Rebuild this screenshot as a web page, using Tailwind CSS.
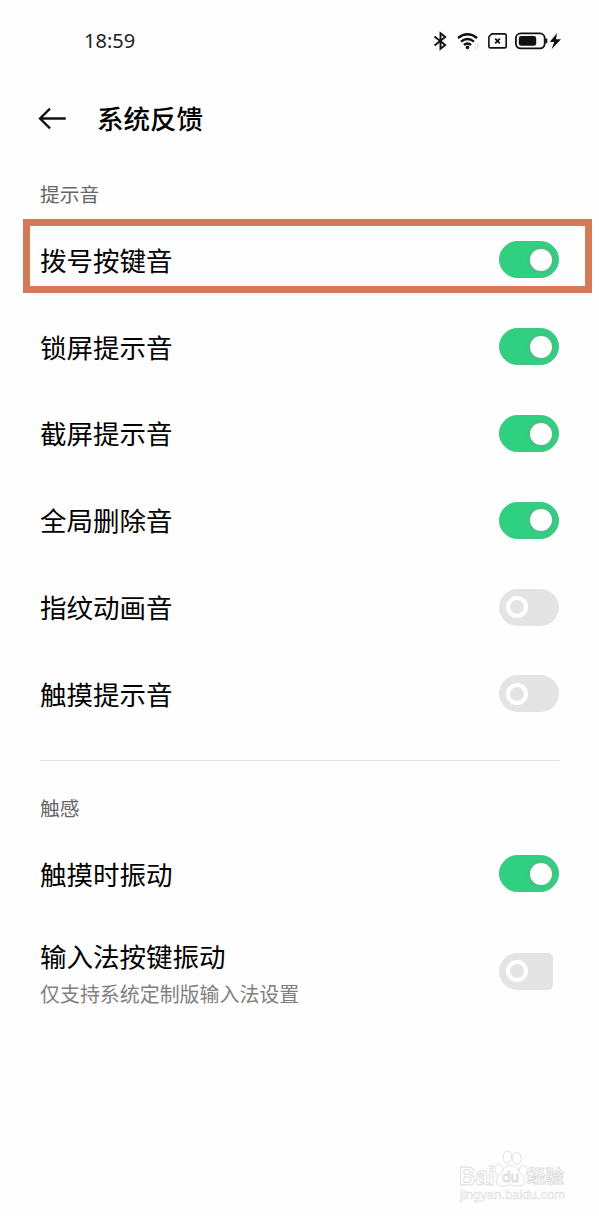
<!DOCTYPE html>
<html lang="zh-CN">
<head>
  <meta charset="UTF-8" />
  <meta name="viewport" content="width=device-width, initial-scale=1.0"/>
  <title>系统反馈</title>
  <script src="https://cdn.jsdelivr.net/npm/@tailwindcss/browser@4"></script>
</head>
<body class="relative h-[1216px] overflow-hidden bg-[#fefefe] text-black font-['Noto_Sans_CJK_SC',sans-serif]">
  <!-- Status bar -->
  <header class="flex h-20 items-center justify-between pl-[84px] pr-[37px] pt-px">
    <span class="font-['Noto_Sans',sans-serif] text-[20px] leading-none text-[#222]">18:59</span>
    <svg class="h-6 w-[130px]" viewBox="0 0 130 24" fill="none" stroke="#111">
      <path d="M2.5 7.5 L13.2 16 L8.5 19.8 V4.2 L13.2 8 L2.5 16.5" stroke-width="1.9"/>
      <path d="M26 9 Q35.5 1.5 45 9 M29 12.6 Q35.5 7.3 42 12.6 M32 16 Q35.5 13 39 16" stroke-width="2.4"/>
      <circle cx="35.5" cy="18.4" r="1.8" fill="#111" stroke="none"/>
      <path d="M43.5 13.5 v2 M46 15.5 v3 M43.5 17.5 v3" stroke="#ddd" stroke-width="1.5"/>
      <path d="M59.8 4.9 H72.5 Q74.2 4.9 74.2 6.6 V17.2 Q74.2 18.9 72.5 18.9 H58.6 Q56.9 18.9 56.9 17.2 V7.8 Z" stroke-width="1.6"/>
      <path d="M63.2 9.7 l4.6 4.6 m0 -4.6 l-4.6 4.6" stroke-width="1.8"/>
      <rect x="83.9" y="4.4" width="28.8" height="15" rx="4.8" stroke-width="1.8"/>
      <rect x="86.8" y="7" width="17.4" height="9.8" rx="2.4" fill="#111" stroke="none"/>
      <path d="M114.3 9.5 v4.8" stroke-width="2"/>
      <path d="M125 4 L117.8 13 h4.4 L119.6 20.3 L129 10.2 h-5 Z" fill="#111" stroke="none"/>
    </svg>
  </header>

  <!-- Title -->
  <div class="flex h-[77px] items-center gap-[30px] pl-[38px]">
    <svg class="h-6 w-[29px]" viewBox="0 0 29 24" fill="none" stroke="#111" stroke-width="2.3">
      <path d="M27.7 11.5 H2 M12 1.6 L2 11.5 L12 21.4"/>
    </svg>
    <h1 class="text-[26.5px] font-medium leading-none">系统反馈</h1>
  </div>

  <main class="pl-10 pr-10">
    <h2 class="flex h-[59.6px] items-center pt-[14px] text-[19.8px] leading-none text-[#666]">提示音</h2>
    <ul class="text-[26.5px] leading-none">
      <li class="relative flex h-[86.8px] items-center justify-between">
        <!-- highlight frame -->
        <div class="absolute -left-[17px] -right-[33px] top-[2.4px] h-[74px] border-[7px] border-[#d57a56]"></div>
        拨号按键音
        <span class="flex h-[37px] w-[60px] items-center justify-end rounded-full border-[1.5px] border-[#43c284] bg-[#2fd080] pr-[6px]">
          <i class="size-[22px] rounded-full bg-white ring-[3px] ring-[#43c284]"></i>
        </span>
      </li>
      <li class="flex h-[86.8px] items-center justify-between">
        锁屏提示音
        <span class="flex h-[37px] w-[60px] items-center justify-end rounded-full border-[1.5px] border-[#43c284] bg-[#2fd080] pr-[6px]">
          <i class="size-[22px] rounded-full bg-white ring-[3px] ring-[#43c284]"></i>
        </span>
      </li>
      <li class="flex h-[86.8px] items-center justify-between">
        截屏提示音
        <span class="flex h-[37px] w-[60px] items-center justify-end rounded-full border-[1.5px] border-[#43c284] bg-[#2fd080] pr-[6px]">
          <i class="size-[22px] rounded-full bg-white ring-[3px] ring-[#43c284]"></i>
        </span>
      </li>
      <li class="flex h-[86.8px] items-center justify-between">
        全局删除音
        <span class="flex h-[37px] w-[60px] items-center justify-end rounded-full border-[1.5px] border-[#43c284] bg-[#2fd080] pr-[6px]">
          <i class="size-[22px] rounded-full bg-white ring-[3px] ring-[#43c284]"></i>
        </span>
      </li>
      <li class="flex h-[86.8px] items-center justify-between">
        指纹动画音
        <span class="flex h-[37px] w-[60px] items-center rounded-full bg-[#e4e4e4] pl-[7px]">
          <i class="size-[22px] rounded-full border-[4.5px] border-white"></i>
        </span>
      </li>
      <li class="flex h-[86.8px] items-center justify-between">
        触摸提示音
        <span class="flex h-[37px] w-[60px] items-center rounded-full bg-[#e4e4e4] pl-[7px]">
          <i class="size-[22px] rounded-full border-[4.5px] border-white"></i>
        </span>
      </li>
    </ul>

    <hr class="mt-[22.6px] border-t border-[#e2e2e2]" />

    <h2 class="flex h-[69.6px] items-center pt-[24px] text-[19.8px] leading-none text-[#666]">触感</h2>
    <ul class="text-[26.5px] leading-none">
      <li class="flex h-[86.8px] items-center justify-between">
        触摸时振动
        <span class="flex h-[37px] w-[60px] items-center justify-end rounded-full border-[1.5px] border-[#43c284] bg-[#2fd080] pr-[6px]">
          <i class="size-[22px] rounded-full bg-white ring-[3px] ring-[#43c284]"></i>
        </span>
      </li>
      <li class="flex h-[108px] items-center justify-between">
        <div class="flex flex-col gap-[14.5px] pt-[3.5px]">
          <span>输入法按键振动</span>
          <span class="text-[19.95px] text-[#808080]">仅支持系统定制版输入法设置</span>
        </div>
        <span class="mr-[6px] flex h-[37px] w-[54px] items-center rounded-l-[18.5px] rounded-r-[5px] bg-[#e4e4e4] pl-[7px]">
          <i class="size-[22px] rounded-full border-[4.5px] border-white"></i>
        </span>
      </li>
    </ul>
  </main>

  <!-- Watermark -->
  <svg class="absolute left-[455px] top-[1145px] h-[62px] w-[120px]" viewBox="0 0 120 62" fill="#fff" stroke="#dcdcdc" stroke-width="0.9">
    <text x="4" y="39.5" font-family="Liberation Sans, sans-serif" font-size="25" font-weight="bold" textLength="35.5" lengthAdjust="spacingAndGlyphs">Bai</text>
    <ellipse cx="44" cy="24.5" rx="4.1" ry="5.5"/>
    <ellipse cx="52.3" cy="12" rx="4.3" ry="6"/>
    <ellipse cx="62" cy="13.3" rx="4.3" ry="6"/>
    <ellipse cx="68" cy="26" rx="4.1" ry="5.5"/>
    <path d="M55.5 20.5 C62 20.5 62.5 26 66 29 C72 34 71 41 63.5 41 C60 41 58.5 40 55.5 40 C52.5 40 51 41 47.5 41 C40 41 39.5 34 45 29 C48.5 26 49 20.5 55.5 20.5 Z"/>
    <text x="47" y="37" font-family="Liberation Sans, sans-serif" font-size="15" textLength="17" lengthAdjust="spacingAndGlyphs">du</text>
    <text x="72" y="37.5" font-family="Noto Sans CJK SC, sans-serif" font-size="18.5" font-weight="bold">经验</text>
    <text x="5" y="53.5" font-family="Liberation Sans, sans-serif" font-size="12.5" stroke-width="0.5" textLength="105" lengthAdjust="spacingAndGlyphs">jingyan.baidu.com</text>
  </svg>
</body>
</html>
